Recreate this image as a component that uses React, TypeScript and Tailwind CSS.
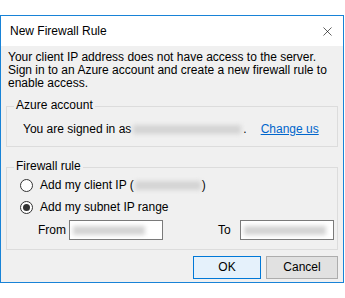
import { X } from "lucide-react";

function GroupBox({ label, className, children }: { label: string; className?: string; children: React.ReactNode }) {
  return (
    <div className={`relative border border-[#dcdcdc] ${className ?? ""}`}>
      <span className="absolute left-[7px] top-[-8px] bg-[#f0f0f0] px-[2px] leading-[13px]">{label}</span>
      {children}
    </div>
  );
}

function Radio({ checked, children }: { checked?: boolean; children: React.ReactNode }) {
  return (
    <div className="flex items-center h-[13px]">
      <span className="w-[13px] h-[13px] rounded-full border border-[#333] bg-white flex items-center justify-center">
        {checked && <span className="w-[7px] h-[7px] rounded-full bg-[#333]" />}
      </span>
      <span className="ml-[7px] flex items-center">{children}</span>
    </div>
  );
}

// redacted value: a soft grey smear, as in the screenshot
function Smear({ className }: { className?: string }) {
  return <span className={`inline-block h-[9px] bg-[#d4d4d4] blur-[2px] ${className ?? ""}`} />;
}

export default function App() {
  return (
    <div className="h-[298px] bg-white pt-[15px] text-[12px] leading-[13px] text-black" style={{ fontFamily: '"Liberation Sans", Arial, sans-serif' }}>
      <div className="w-[344px] h-[268px] border border-[#1883d7] flex flex-col">
        {/* title bar */}
        <div className="h-[30px] bg-white flex items-center justify-between pl-[9px] pr-[8px]">
          <span className="text-[12px]">New Firewall Rule</span>
          <X className="w-[15px] h-[15px] text-black" strokeWidth={1} />
        </div>

        {/* body */}
        <div className="flex-1 bg-[#f0f0f0] pl-[5px] pr-[5px]">
          <p className="pt-[5px] pl-[2px] pr-[10px]">
            Your client IP address does not have access to the server. Sign in to an Azure account and create a new firewall rule to enable access.
          </p>

          <GroupBox label="Azure account" className="mt-[16px] h-[41px]">
            <div className="flex items-center pl-[16px] pt-[16px]">
              <span>You are signed in as</span>
              <Smear className="ml-[2px] w-[108px]" />
              <span className="ml-[2px]">.</span>
              <a href="#" className="ml-[14px] text-[#0066cc] underline">Change us</a>
            </div>
          </GroupBox>

          <GroupBox label="Firewall rule" className="mt-[20px] h-[83px]">
            <div className="flex flex-col gap-[9px] pl-[13px] pt-[11px]">
              <Radio>
                <span>Add my client IP (</span>
                <Smear className="w-[66px] mx-[1px]" />
                <span>)</span>
              </Radio>
              <Radio checked>Add my subnet IP range</Radio>
            </div>
            <div className="flex items-center mt-[6px] pl-[31px]">
              <span className="w-[31px]">From</span>
              <div className="w-[94px] h-[20px] border border-[#7a7a7a] bg-white flex items-center pl-[3px]">
                <Smear className="w-[72px]" />
              </div>
              <span className="ml-[55px] w-[22px]">To</span>
              <div className="w-[94px] h-[20px] border border-[#7a7a7a] bg-white flex items-center pl-[3px]">
                <Smear className="w-[82px]" />
              </div>
            </div>
          </GroupBox>

          <div className="flex justify-end gap-[5px] mt-[6px]">
            <button className="w-[68px] h-[23px] border border-[#0078d7] bg-[#e5f1fb]">OK</button>
            <button className="w-[72px] h-[23px] border border-[#adadad] bg-[#e1e1e1]">Cancel</button>
          </div>
        </div>
      </div>
    </div>
  );
}
